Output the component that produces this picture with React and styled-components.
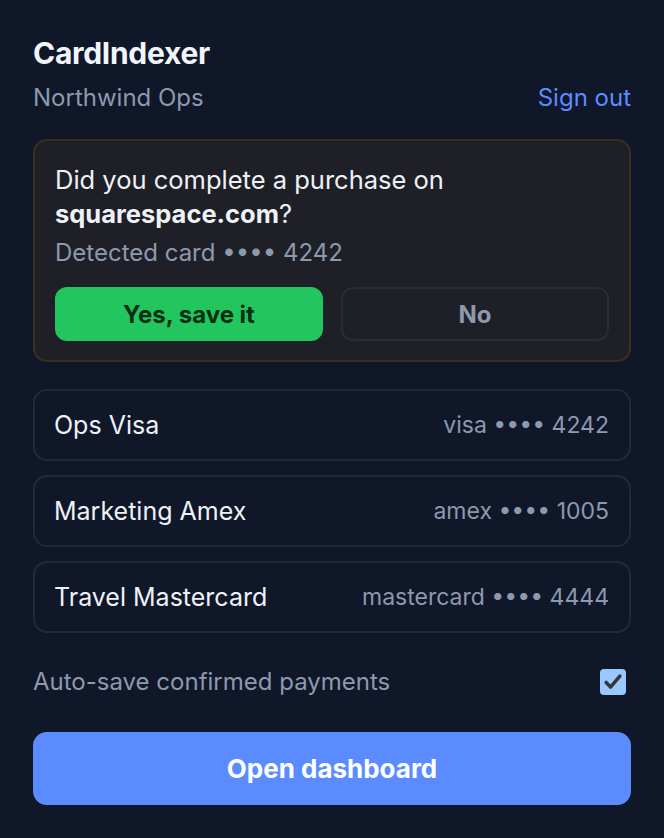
import React, { useState } from "react";
import styled, { createGlobalStyle } from "styled-components";

const GlobalStyle = createGlobalStyle`
  html, body {
    margin: 0;
    padding: 0;
    background: #0f1729;
  }
  body {
    font-family: Inter, "Noto Sans", "Liberation Sans", sans-serif;
    -webkit-font-smoothing: antialiased;
  }
`;

const Popup = styled.div`
  width: 664px;
  min-height: 838px;
  box-sizing: border-box;
  padding: 34px 33px 32px;
  background: #0f1729;
  color: #f1f5f9;
  display: flex;
  flex-direction: column;
`;

const Header = styled.header`
  display: flex;
  flex-direction: column;
`;

const Title = styled.h1`
  margin: 0;
  font-size: 30px;
  line-height: 38px;
  font-weight: 700;
  letter-spacing: -0.3px;
  color: #f1f5f9;
`;

const SubRow = styled.div`
  display: flex;
  justify-content: space-between;
  align-items: center;
  margin-top: 11px;
`;

const Workspace = styled.span`
  font-size: 24px;
  line-height: 30px;
  color: #8d99ae;
`;

const LinkButton = styled.button`
  border: 0;
  background: none;
  padding: 0;
  font: inherit;
  font-size: 24px;
  line-height: 30px;
  color: #5b8cff;
  cursor: pointer;
`;

const Prompt = styled.section`
  margin-top: 26px;
  padding: 22px 20px 19px;
  background: #1f2027;
  border: 2px solid #3a2f1c;
  border-radius: 14px;
`;

const Question = styled.p`
  margin: 0;
  font-size: 25.5px;
  line-height: 34px;
  color: #eef1f6;

  strong {
    font-weight: 700;
  }
`;

const Detected = styled.p`
  margin: 7px 0 0;
  font-size: 24px;
  line-height: 30px;
  color: #8d99ae;
`;

const Actions = styled.div`
  display: grid;
  grid-template-columns: 1fr 1fr;
  gap: 18px;
  margin-top: 19px;
`;

const ActionButton = styled.button`
  height: 54px;
  border-radius: 12px;
  font: inherit;
  font-size: 24px;
  font-weight: 700;
  cursor: pointer;
  border: 2px solid ${(p) => (p.$primary ? "#22c55e" : "#272c38")};
  background: ${(p) => (p.$primary ? "#22c55e" : "transparent")};
  color: ${(p) => (p.$primary ? "#052e12" : "#8d99ae")};
`;

const CardList = styled.ul`
  list-style: none;
  margin: 27px 0 0;
  padding: 0;
  display: flex;
  flex-direction: column;
  gap: 14px;
`;

const CardRow = styled.li`
  height: 72px;
  box-sizing: border-box;
  padding: 0 20px 0 19px;
  display: flex;
  align-items: center;
  justify-content: space-between;
  border: 2px solid #222a38;
  border-radius: 14px;
`;

const CardName = styled.span`
  font-size: 25px;
  color: #eef1f6;
`;

const CardMeta = styled.span`
  font-size: 23px;
  color: #8d99ae;
`;

const SettingRow = styled.label`
  margin-top: 34px;
  display: flex;
  align-items: center;
  justify-content: space-between;
  padding-right: 5px;
  font-size: 24px;
  line-height: 30px;
  color: #8d99ae;
  cursor: pointer;
`;

const CheckBox = styled.span`
  width: 26px;
  height: 26px;
  border-radius: 4px;
  background: ${(p) => (p.$checked ? "#99c8ff" : "transparent")};
  border: ${(p) => (p.$checked ? "0" : "2px solid #8d99ae")};
  display: flex;
  align-items: center;
  justify-content: center;
`;

const PrimaryButton = styled.button`
  margin-top: 35px;
  height: 73px;
  border: 0;
  border-radius: 14px;
  background: #5b8cff;
  color: #ffffff;
  font: inherit;
  font-size: 26px;
  font-weight: 700;
  cursor: pointer;
`;

const cards = [
  { name: "Ops Visa", brand: "visa", last4: "4242" },
  { name: "Marketing Amex", brand: "amex", last4: "1005" },
  { name: "Travel Mastercard", brand: "mastercard", last4: "4444" },
];

export default function App() {
  const [autoSave, setAutoSave] = useState(true);

  return (
    <>
      <GlobalStyle />
      <Popup>
        <Header>
          <Title>CardIndexer</Title>
          <SubRow>
            <Workspace>Northwind Ops</Workspace>
            <LinkButton>Sign out</LinkButton>
          </SubRow>
        </Header>

        <Prompt>
          <Question>
            Did you complete a purchase on
            <br />
            <strong>squarespace.com</strong>?
          </Question>
          <Detected>Detected card •••• 4242</Detected>
          <Actions>
            <ActionButton $primary>Yes, save it</ActionButton>
            <ActionButton>No</ActionButton>
          </Actions>
        </Prompt>

        <CardList>
          {cards.map((card) => (
            <CardRow key={card.name}>
              <CardName>{card.name}</CardName>
              <CardMeta>
                {card.brand} •••• {card.last4}
              </CardMeta>
            </CardRow>
          ))}
        </CardList>

        <SettingRow onClick={() => setAutoSave((v) => !v)}>
          Auto-save confirmed payments
          <CheckBox $checked={autoSave}>
            {autoSave && (
              <svg width="22" height="22" viewBox="0 0 24 24" fill="none">
                <path
                  d="M4.5 12.5l4.8 5L19.5 5.5"
                  stroke="#33363d"
                  strokeWidth="3.8"
                  strokeLinecap="round"
                  strokeLinejoin="round"
                />
              </svg>
            )}
          </CheckBox>
        </SettingRow>

        <PrimaryButton>Open dashboard</PrimaryButton>
      </Popup>
    </>
  );
}
